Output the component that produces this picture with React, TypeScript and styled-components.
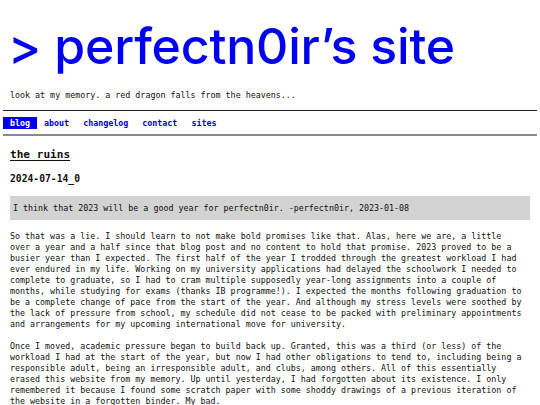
import React from 'react';
import styled, { createGlobalStyle } from 'styled-components';

const GlobalStyle = createGlobalStyle`
  html, body {
    margin: 0;
    padding: 0;
    background: #ffffff;
  }
  body {
    font-family: "DejaVu Sans Mono", monospace;
    font-size: 8.33px;
    color: #111;
  }
`;

const Page = styled.div`
  padding: 0 3px;
`;

const Title = styled.h1`
  margin: 0;
  padding: 20px 0 0 5px;
  font-family: Inter, "Noto Sans", sans-serif;
  font-weight: 500;
  font-size: 50px;
  line-height: 52px;
  color: #0000f0;
  letter-spacing: -0.2px;
`;

const Tagline = styled.p`
  margin: 18px 0 0 7px;
  line-height: 11px;
`;

const Rule = styled.hr<{ $heavy?: boolean }>`
  margin: 0;
  border: none;
  height: ${p => (p.$heavy ? '2px' : '1px')};
  background: ${p => (p.$heavy ? '#8a8a8a' : '#222')};
`;

const Nav = styled.nav`
  display: flex;
  padding: 6px 0 5px;
`;

const NavLink = styled.a<{ $active?: boolean }>`
  padding: 0 7px;
  font-weight: bold;
  line-height: 12px;
  text-decoration: none;
  color: ${p => (p.$active ? '#ffffff' : '#0000e0')};
  background: ${p => (p.$active ? '#0000f0' : 'transparent')};
`;

const Content = styled.main`
  padding: 0 7px;
`;

const PostTitle = styled.h2`
  margin: 12px 0 0;
  font-size: 11.1px;
  line-height: 14px;
  font-weight: bold;
  text-decoration: underline;
  text-underline-offset: 2px;
`;

const PostDate = styled.h3`
  margin: 11px 0 0;
  font-size: 9.7px;
  line-height: 12px;
  font-weight: bold;
`;

const Quote = styled.blockquote`
  margin: 11px 0 0;
  padding: 6px 3px;
  background: #d3d3d3;
  line-height: 12px;
`;

const Paragraph = styled.p`
  margin: 11px 0 0;
  max-width: 102.5ch;
  line-height: 11px;
`;

const links = ['blog', 'about', 'changelog', 'contact', 'sites'];

const App: React.FC = () => (
  <Page>
    <GlobalStyle />
    <Title>&gt; perfectn0ir’s site</Title>
    <Tagline>look at my memory. a red dragon falls from the heavens...</Tagline>
    <Rule style={{ marginTop: 9 }} />
    <Nav>
      {links.map(l => (
        <NavLink key={l} href="#" $active={l === 'blog'}>{l}</NavLink>
      ))}
    </Nav>
    <Rule $heavy />
    <Content>
      <PostTitle>the ruins</PostTitle>
      <PostDate>2024-07-14_0</PostDate>
      <Quote>I think that 2023 will be a good year for perfectn0ir. -perfectn0ir, 2023-01-08</Quote>
      <Paragraph>
        So that was a lie. I should learn to not make bold promises like that. Alas, here we are, a little over a year and a half since that blog post and no content to hold that promise. 2023 proved to be a busier year than I expected. The first half of the year I trodded through the greatest workload I had ever endured in my life. Working on my university applications had delayed the schoolwork I needed to complete to graduate, so I had to cram multiple supposedly year-long assignments into a couple of months, while studying for exams (thanks IB programme!). I expected the months following graduation to be a complete change of pace from the start of the year. And although my stress levels were soothed by the lack of pressure from school, my schedule did not cease to be packed with preliminary appointments and arrangements for my upcoming international move for university.
      </Paragraph>
      <Paragraph>
        Once I moved, academic pressure began to build back up. Granted, this was a third (or less) of the workload I had at the start of the year, but now I had other obligations to tend to, including being a responsible adult, being an irresponsible adult, and clubs, among others. All of this essentially erased this website from my memory. Up until yesterday, I had forgotten about its existence. I only remembered it because I found some scratch paper with some shoddy drawings of a previous iteration of the website in a forgotten binder. My bad.
      </Paragraph>
    </Content>
  </Page>
);

export default App;
